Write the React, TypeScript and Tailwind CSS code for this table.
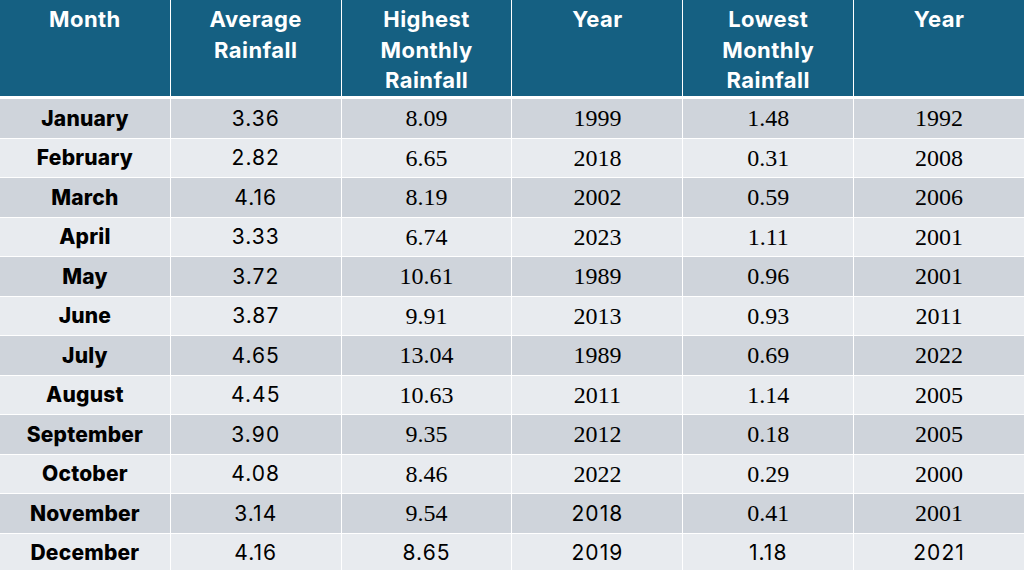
import React from 'react';

type Cell = { v: string; serif?: boolean };

const S = (v: string): Cell => ({ v });
const R = (v: string): Cell => ({ v, serif: true });

const headers = [
  ['Month'],
  ['Average', 'Rainfall'],
  ['Highest', 'Monthly', 'Rainfall'],
  ['Year'],
  ['Lowest', 'Monthly', 'Rainfall'],
  ['Year'],
];

const rows: { month: string; cells: Cell[] }[] = [
  { month: 'January', cells: [S('3.36'), R('8.09'), R('1999'), R('1.48'), R('1992')] },
  { month: 'February', cells: [S('2.82'), R('6.65'), R('2018'), R('0.31'), R('2008')] },
  { month: 'March', cells: [S('4.16'), R('8.19'), R('2002'), R('0.59'), R('2006')] },
  { month: 'April', cells: [S('3.33'), R('6.74'), R('2023'), R('1.11'), R('2001')] },
  { month: 'May', cells: [S('3.72'), R('10.61'), R('1989'), R('0.96'), R('2001')] },
  { month: 'June', cells: [S('3.87'), R('9.91'), R('2013'), R('0.93'), R('2011')] },
  { month: 'July', cells: [S('4.65'), R('13.04'), R('1989'), R('0.69'), R('2022')] },
  { month: 'August', cells: [S('4.45'), R('10.63'), R('2011'), R('1.14'), R('2005')] },
  { month: 'September', cells: [S('3.90'), R('9.35'), R('2012'), R('0.18'), R('2005')] },
  { month: 'October', cells: [S('4.08'), R('8.46'), R('2022'), R('0.29'), R('2000')] },
  { month: 'November', cells: [S('3.14'), R('9.54'), S('2018'), R('0.41'), R('2001')] },
  { month: 'December', cells: [S('4.16'), S('8.65'), S('2019'), S('1.18'), S('2021')] },
];

export default function App() {
  return (
    <div className="w-[1024px] h-[570px] overflow-hidden bg-white font-['Inter',sans-serif]">
      {/* header */}
      <div className="grid grid-cols-6 gap-x-px bg-white/80 border-b-[3px] border-white">
        {headers.map((h, i) => (
          <div
            key={i}
            className="h-[96px] bg-[#156082] text-white font-bold text-[22px] leading-[30.5px] text-center pt-[4px] tracking-[0.02em]"
          >
            {h.map((line) => (
              <div key={line}>{line}</div>
            ))}
          </div>
        ))}
      </div>

      {/* body */}
      <div className="flex flex-col gap-y-px">
        {rows.map((r, i) => {
          const bg = i % 2 === 0 ? 'bg-[#cfd4db]' : 'bg-[#e8ebef]';
          return (
            <div key={r.month} className="grid grid-cols-6 gap-x-px">
              <div className={`${bg} h-[38.5px] flex items-center justify-center font-extrabold text-[21px] text-black tracking-[0.01em]`}>
                {r.month}
              </div>
              {r.cells.map((c, j) => (
                <div
                  key={j}
                  className={
                    c.serif
                      ? `${bg} h-[38.5px] flex items-center justify-center text-black font-['Liberation_Serif',serif] text-[24px]`
                      : `${bg} h-[38.5px] flex items-center justify-center text-black text-[21px] tracking-[0.05em]`
                  }
                >
                  {c.v}
                </div>
              ))}
            </div>
          );
        })}
      </div>
    </div>
  );
}
